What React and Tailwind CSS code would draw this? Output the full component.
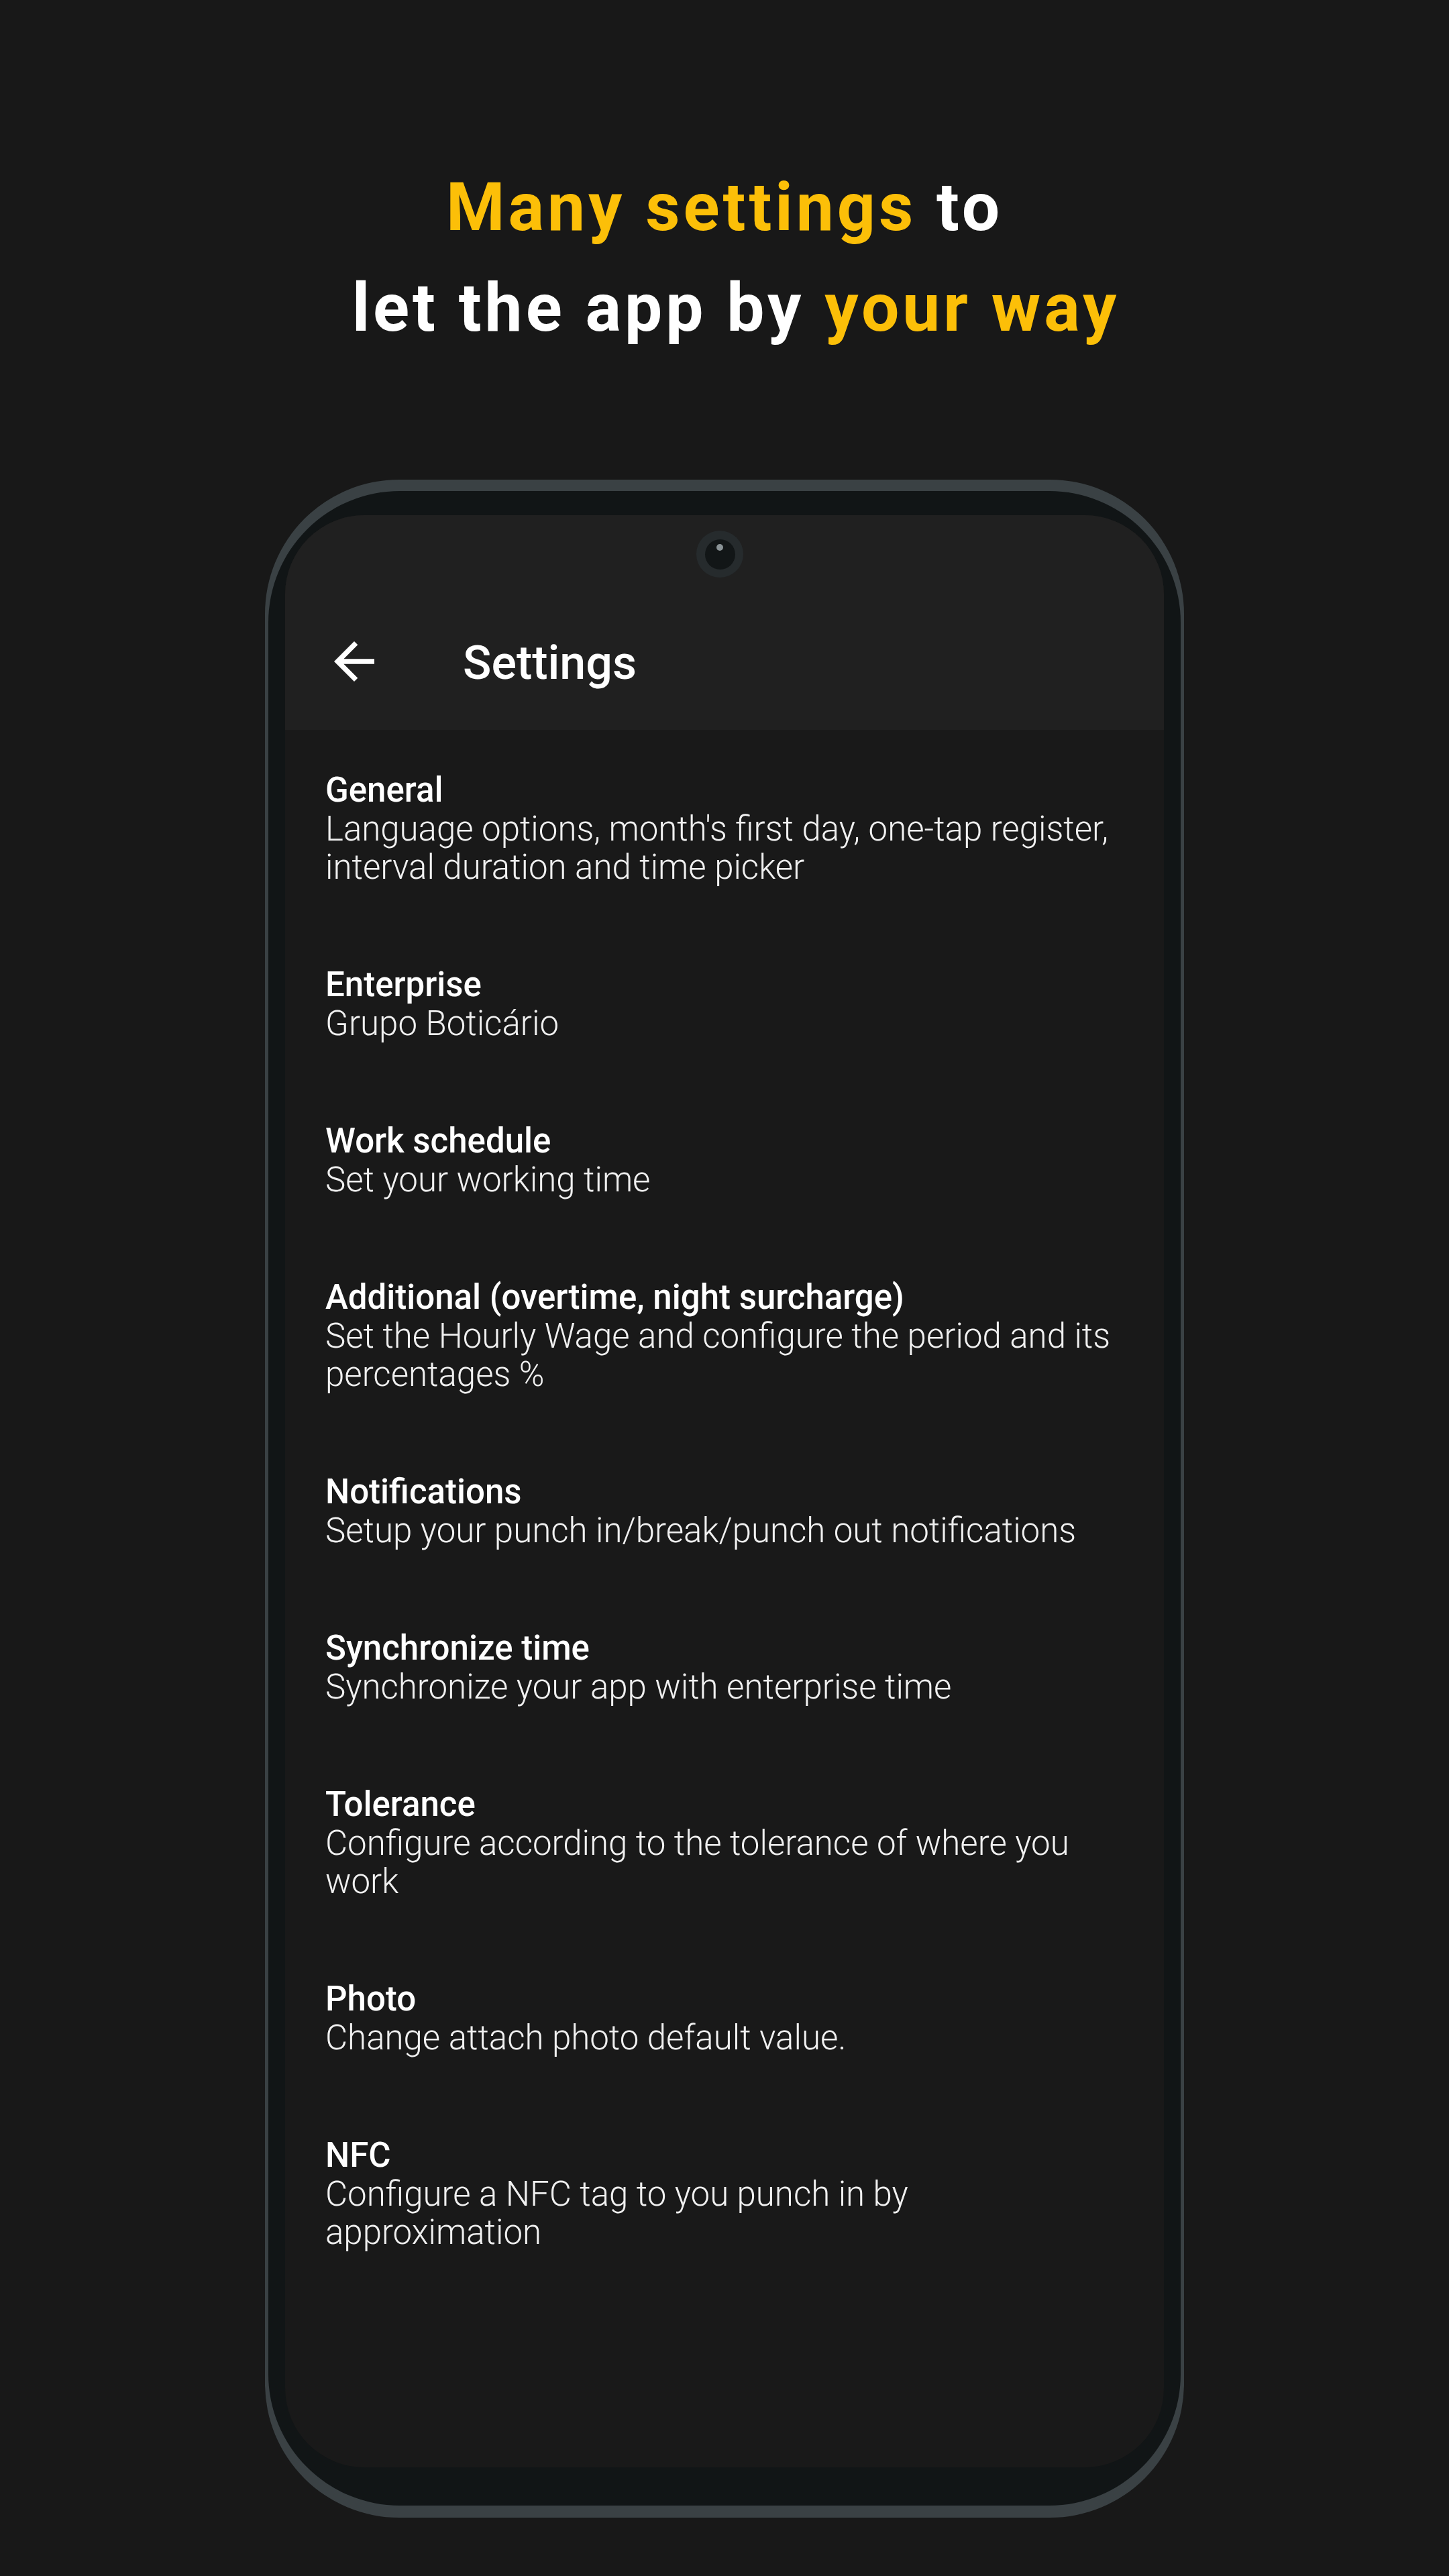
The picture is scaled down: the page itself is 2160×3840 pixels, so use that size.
import React from 'react'

const items = [
  { title: 'General', desc: "Language options, month's first day, one-tap register, interval duration and time picker" },
  { title: 'Enterprise', desc: 'Grupo Boticário' },
  { title: 'Work schedule', desc: 'Set your working time' },
  { title: 'Additional (overtime, night surcharge)', desc: 'Set the Hourly Wage and configure the period and its percentages %' },
  { title: 'Notifications', desc: 'Setup your punch in/break/punch out notifications' },
  { title: 'Synchronize time', desc: 'Synchronize your app with enterprise time' },
  { title: 'Tolerance', desc: 'Configure according to the tolerance of where you work' },
  { title: 'Photo', desc: 'Change attach photo default value.' },
  { title: 'NFC', desc: 'Configure a NFC tag to you punch in by approximation' },
]

function BackArrow() {
  return (
    <svg width="90" height="90" viewBox="0 0 24 24" fill="#ffffff">
      <path d="M20 11H7.83l5.59-5.59L12 4l-8 8 8 8 1.41-1.41L7.83 13H20v-2z" />
    </svg>
  )
}

function SettingItem({ title, desc }) {
  return (
    <div className="pl-[60px] pr-[60px] pt-[58px] pb-[59px]">
      <div className="text-[51px] leading-[59px] font-medium text-white">{title}</div>
      <div className="text-[51px] leading-[57px] font-light text-[#f0f0f0]">{desc}</div>
    </div>
  )
}

export default function App() {
  return (
    <div className="w-[2160px] h-[3840px] bg-[#181818] overflow-hidden" style={{ fontFamily: 'Roboto, "Liberation Sans", sans-serif' }}>
      <div className="pt-[234px] text-center text-[100px] leading-[150px] font-bold tracking-[0.05em] text-white">
        <div><span className="text-[#fcbf08]">Many settings</span> to</div>
        <div className="pl-[34px]">let the app by <span className="text-[#fcbf08]">your way</span></div>
      </div>

      <div className="mt-[181px] mx-auto w-[1370px] rounded-[200px] bg-[#3a4144] pt-[17px] px-[5px] pb-[18px]">
        <div className="rounded-[196px] bg-[#111516] pt-[36px] px-[25px] pb-[57px]">
          <div className="h-[2910px] rounded-[118px] overflow-hidden bg-[#191919] flex flex-col">
            <div className="relative h-[320px] bg-[#202020] pt-[116px]">
              <div className="absolute left-[613px] top-[23px] w-[70px] h-[70px] rounded-full bg-[#262b2d] flex items-center justify-center">
                <div className="relative w-[45px] h-[45px] rounded-full bg-[#121617]">
                  <div className="absolute left-[17px] top-[7px] w-[10px] h-[10px] rounded-full bg-[#8a9396]" />
                </div>
              </div>
              <div className="h-[204px] flex items-center pl-[58px]">
                <BackArrow />
                <div className="ml-[117px] mt-[4px] text-[70px] leading-none font-medium text-white">Settings</div>
              </div>
            </div>
            <div className="flex-1 pt-[2px]">
              {items.map((it) => (
                <SettingItem key={it.title} title={it.title} desc={it.desc} />
              ))}
            </div>
          </div>
        </div>
      </div>
    </div>
  )
}
